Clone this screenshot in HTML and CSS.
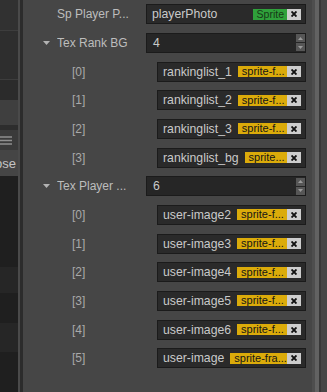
FILE: index.html
```html
<!DOCTYPE html>
<html lang="en">
<head>
    <meta charset="UTF-8"/>
    <title>Inspector</title>
    <link rel="stylesheet" href="styles.css">
</head>
<body>
<div class="app">
    <!-- left panel, mostly hidden behind the splitter -->
    <div class="side">
        <div class="side-block top"></div>
        <div class="side-block mid"></div>
        <div class="side-block low"></div>
        <div class="side-foot"></div>
        <div class="side-gap"></div>
        <div class="side-toolbar">
            <svg width="12" height="11" viewBox="0 0 12 11">
                <path d="M0 2h12M0 5.5h12M0 9h12" stroke="#8f8f8f" stroke-width="1.6"/>
            </svg>
        </div>
        <div class="side-close"><span>Close</span></div>
        <div class="side-list">
            <div class="side-row dark" style="height: 91px"></div>
            <div class="side-row" style="height: 26px"></div>
            <div class="side-row dark" style="height: 30px"></div>
            <div class="side-row" style="height: 29px"></div>
            <div class="side-row dark" style="height: 40px"></div>
        </div>
    </div>
    <div class="splitter"></div>

    <!-- Inspector -->
    <div class="inspector">
        <div class="row">
            <span class="arrow"></span>
            <span class="label">Sp Player P...</span>
            <div class="field">
                <span class="name">playerPhoto</span>
                <span class="badge node">Sprite</span>
                <span class="clear"><svg width="6" height="6" viewBox="0 0 6 6"><path d="M0.5 0.5l5 5M5.5 0.5l-5 5" stroke="#111" stroke-width="1.9"/></svg></span>
            </div>
        </div>

        <div class="row">
            <span class="arrow"><svg width="7" height="4" viewBox="0 0 7 4"><polygon points="0,0 7,0 3.5,4" fill="#b3b3b3"/></svg></span>
            <span class="label">Tex Rank BG</span>
            <div class="field number">
                <span class="value">4</span>
                <span class="spin">
                    <span class="spin-btn"><svg width="5" height="3" viewBox="0 0 5 3"><polygon points="0,3 5,3 2.5,0" fill="#9a9a9a"/></svg></span>
                    <span class="spin-btn"><svg width="5" height="3" viewBox="0 0 5 3"><polygon points="0,0 5,0 2.5,3" fill="#9a9a9a"/></svg></span>
                </span>
            </div>
        </div>

        <div class="row item">
            <span class="arrow"></span>
            <span class="label">[0]</span>
            <div class="field">
                <span class="name">rankinglist_1</span>
                <span class="badge">sprite-f...</span>
                <span class="clear"><svg width="6" height="6" viewBox="0 0 6 6"><path d="M0.5 0.5l5 5M5.5 0.5l-5 5" stroke="#111" stroke-width="1.9"/></svg></span>
            </div>
        </div>
        <div class="row item">
            <span class="arrow"></span>
            <span class="label">[1]</span>
            <div class="field">
                <span class="name">rankinglist_2</span>
                <span class="badge">sprite-f...</span>
                <span class="clear"><svg width="6" height="6" viewBox="0 0 6 6"><path d="M0.5 0.5l5 5M5.5 0.5l-5 5" stroke="#111" stroke-width="1.9"/></svg></span>
            </div>
        </div>
        <div class="row item">
            <span class="arrow"></span>
            <span class="label">[2]</span>
            <div class="field">
                <span class="name">rankinglist_3</span>
                <span class="badge">sprite-f...</span>
                <span class="clear"><svg width="6" height="6" viewBox="0 0 6 6"><path d="M0.5 0.5l5 5M5.5 0.5l-5 5" stroke="#111" stroke-width="1.9"/></svg></span>
            </div>
        </div>
        <div class="row item">
            <span class="arrow"></span>
            <span class="label">[3]</span>
            <div class="field">
                <span class="name">rankinglist_bg</span>
                <span class="badge">sprite...</span>
                <span class="clear"><svg width="6" height="6" viewBox="0 0 6 6"><path d="M0.5 0.5l5 5M5.5 0.5l-5 5" stroke="#111" stroke-width="1.9"/></svg></span>
            </div>
        </div>

        <div class="row">
            <span class="arrow"><svg width="7" height="4" viewBox="0 0 7 4"><polygon points="0,0 7,0 3.5,4" fill="#b3b3b3"/></svg></span>
            <span class="label">Tex Player ...</span>
            <div class="field number">
                <span class="value">6</span>
                <span class="spin">
                    <span class="spin-btn"><svg width="5" height="3" viewBox="0 0 5 3"><polygon points="0,3 5,3 2.5,0" fill="#9a9a9a"/></svg></span>
                    <span class="spin-btn"><svg width="5" height="3" viewBox="0 0 5 3"><polygon points="0,0 5,0 2.5,3" fill="#9a9a9a"/></svg></span>
                </span>
            </div>
        </div>

        <div class="row item">
            <span class="arrow"></span>
            <span class="label">[0]</span>
            <div class="field">
                <span class="name">user-image2</span>
                <span class="badge">sprite-f...</span>
                <span class="clear"><svg width="6" height="6" viewBox="0 0 6 6"><path d="M0.5 0.5l5 5M5.5 0.5l-5 5" stroke="#111" stroke-width="1.9"/></svg></span>
            </div>
        </div>
        <div class="row item">
            <span class="arrow"></span>
            <span class="label">[1]</span>
            <div class="field">
                <span class="name">user-image3</span>
                <span class="badge">sprite-f...</span>
                <span class="clear"><svg width="6" height="6" viewBox="0 0 6 6"><path d="M0.5 0.5l5 5M5.5 0.5l-5 5" stroke="#111" stroke-width="1.9"/></svg></span>
            </div>
        </div>
        <div class="row item">
            <span class="arrow"></span>
            <span class="label">[2]</span>
            <div class="field">
                <span class="name">user-image4</span>
                <span class="badge">sprite-f...</span>
                <span class="clear"><svg width="6" height="6" viewBox="0 0 6 6"><path d="M0.5 0.5l5 5M5.5 0.5l-5 5" stroke="#111" stroke-width="1.9"/></svg></span>
            </div>
        </div>
        <div class="row item">
            <span class="arrow"></span>
            <span class="label">[3]</span>
            <div class="field">
                <span class="name">user-image5</span>
                <span class="badge">sprite-f...</span>
                <span class="clear"><svg width="6" height="6" viewBox="0 0 6 6"><path d="M0.5 0.5l5 5M5.5 0.5l-5 5" stroke="#111" stroke-width="1.9"/></svg></span>
            </div>
        </div>
        <div class="row item">
            <span class="arrow"></span>
            <span class="label">[4]</span>
            <div class="field">
                <span class="name">user-image6</span>
                <span class="badge">sprite-f...</span>
                <span class="clear"><svg width="6" height="6" viewBox="0 0 6 6"><path d="M0.5 0.5l5 5M5.5 0.5l-5 5" stroke="#111" stroke-width="1.9"/></svg></span>
            </div>
        </div>
        <div class="row item">
            <span class="arrow"></span>
            <span class="label">[5]</span>
            <div class="field">
                <span class="name">user-image</span>
                <span class="badge">sprite-fra...</span>
                <span class="clear"><svg width="6" height="6" viewBox="0 0 6 6"><path d="M0.5 0.5l5 5M5.5 0.5l-5 5" stroke="#111" stroke-width="1.9"/></svg></span>
            </div>
        </div>
    </div>

    <div class="scrollbar"><div class="thumb"></div></div>
    <div class="edge"></div>
</div>
</body>
</html>
```

FILE: styles.css
```css
* {
    margin: 0;
    padding: 0;
    box-sizing: border-box;
}
body {
    width: 327px;
    height: 392px;
    overflow: hidden;
    background: #464646;
    font-family: "Liberation Sans", Arial, sans-serif;
}
.app {
    display: flex;
    height: 392px;
}

/* left panel */
.side {
    width: 20px;
    flex: none;
    display: flex;
    flex-direction: column;
    border-right: 2px solid #4a4a4a;
    overflow: hidden;
}
.side-block {
    border-bottom: 1px solid #3d3d3d;
}
.side-block.top {
    height: 31px;
    background: #313131;
}
.side-block.mid {
    height: 49px;
    background: #2e2e2e;
}
.side-block.low {
    height: 20px;
    background: #2b2b2b;
    border-bottom: none;
}
.side-foot {
    height: 25px;
    background: #3f3f3f;
}
.side-gap {
    height: 5px;
    background: #2d2d2d;
}
.side-toolbar {
    height: 20px;
    background: #3a3a3a;
    display: flex;
    align-items: center;
}
.side-close {
    height: 26px;
    background: #454545;
    display: flex;
    align-items: center;
    justify-content: flex-end;
    padding-right: 2px;
    font-size: 13px;
    color: #c4c4c4;
    white-space: nowrap;
}
.side-list {
    flex: 1;
    background: #1f1f1f;
}
.side-row {
    background: #262626;
}
.side-row.dark {
    background: #1f1f1f;
}
.splitter {
    width: 3px;
    flex: none;
    background: #2c2c2c;
}

/* inspector */
.inspector {
    flex: 1;
    min-width: 0;
    padding-right: 6px;
}
.row {
    display: flex;
    align-items: center;
    height: 28.67px;
    padding-left: 20px;
}
.arrow {
    width: 14px;
    flex: none;
    display: flex;
    align-items: center;
}
.label {
    width: 89px;
    flex: none;
    font-size: 12px;
    color: #bdbdbd;
    white-space: nowrap;
    overflow: hidden;
}
.row.item .label {
    width: 100px;
    padding-left: 15px;
    color: #a9a9a9;
}
.field {
    flex: 1;
    min-width: 0;
    height: 20px;
    display: flex;
    align-items: center;
    padding: 0 4px 0 5px;
    border: 1px solid #1b1b1b;
    background: #2a2a2a;
    font-size: 12.25px;
    color: #c9c9c9;
    white-space: nowrap;
}
.name {
    flex: none;
}
.badge {
    flex: 1;
    min-width: 0;
    overflow: hidden;
    height: 11px;
    line-height: 11px;
    margin-left: 6px;
    padding-left: 4px;
    font-size: 11px;
    color: #161616;
    background: #dbab0a;
}
.badge.node {
    flex: none;
    margin-left: auto;
    padding: 0 3px 0 4px;
    font-size: 10.5px;
    background: #2fa13b;
    color: #173a17;
}
.clear {
    width: 14px;
    height: 11px;
    flex: none;
    display: flex;
    align-items: center;
    justify-content: center;
    background: #cdcdcd;
}
.field.number {
    padding-right: 0;
    padding-left: 6px;
    background: #262626;
}
.value {
    flex: 1;
}
.spin {
    width: 9px;
    display: flex;
    flex-direction: column;
    gap: 1px;
}
.spin-btn {
    height: 8px;
    display: flex;
    align-items: center;
    justify-content: center;
    background: #565656;
}

.scrollbar {
    width: 7px;
    flex: none;
    background: #4e4e4e;
    padding-left: 3px;
}
.thumb {
    height: 100%;
    background: #626262;
}
.edge {
    width: 8px;
    flex: none;
    background: #464646;
    border-left: 2px solid #383838;
}
```
